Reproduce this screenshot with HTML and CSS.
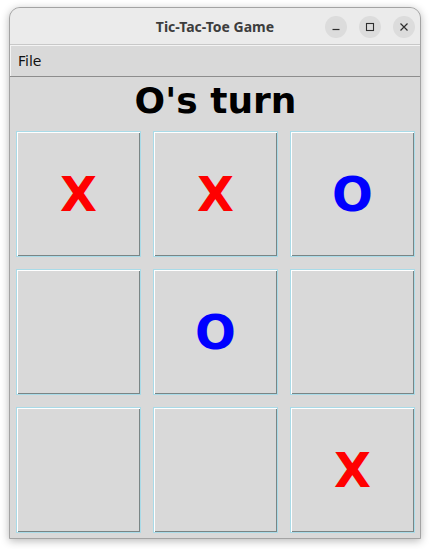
FILE: index.html
```html
<!DOCTYPE html>
<html>
<head>
<meta charset="utf-8">
<title>Tic-Tac-Toe Game</title>
<link rel="stylesheet" href="styles.css">
</head>
<body>
<div class="window">
  <div class="titlebar">
    <div class="spacer"></div>
    <div class="title">Tic-Tac-Toe Game</div>
    <div class="controls">
      <span class="ctl"><svg width="22" height="22" viewBox="0 0 22 22"><line x1="7.5" y1="13.5" x2="14.5" y2="13.5" stroke="#2e2e2e" stroke-width="1.2"/></svg></span>
      <span class="ctl"><svg width="22" height="22" viewBox="0 0 22 22"><rect x="7.5" y="7.5" width="7" height="7" fill="none" stroke="#2e2e2e" stroke-width="1.1"/></svg></span>
      <span class="ctl"><svg width="22" height="22" viewBox="0 0 22 22"><path d="M7.5 7.5 L14.5 14.5 M14.5 7.5 L7.5 14.5" stroke="#2e2e2e" stroke-width="1.2"/></svg></span>
    </div>
  </div>
  <div class="menubar"><span class="menu">File</span></div>
  <div class="content">
    <div class="status">O's turn</div>
    <div class="board">
      <div class="cell x">X</div>
      <div class="cell x">X</div>
      <div class="cell o">O</div>
      <div class="cell"></div>
      <div class="cell o">O</div>
      <div class="cell"></div>
      <div class="cell"></div>
      <div class="cell"></div>
      <div class="cell x">X</div>
    </div>
  </div>
</div>
</body>
</html>
```
FILE: styles.css
```css
html, body {
  margin: 0;
  padding: 0;
  background: #ffffff;
}
body {
  padding: 7px 0 0 9px;
  width: 431px;
  height: 549px;
  box-sizing: border-box;
  overflow: hidden;
}
.window {
  width: 412px;
  box-sizing: border-box;
  border: 1px solid #a3a3a3;
  border-radius: 11px 11px 0 0;
  background: #d9d9d9;
  box-shadow: 0 2px 9px rgba(0, 0, 0, 0.28);
}
.titlebar {
  height: 36px;
  background: #ebebeb;
  border-bottom: 1px solid #c8c8c8;
  border-radius: 10px 10px 0 0;
  display: grid;
  grid-template-columns: 1fr auto 1fr;
  align-items: center;
}
.title {
  font-family: "Noto Sans", "DejaVu Sans", sans-serif;
  font-weight: bold;
  font-size: 14px;
  color: #3d3d3d;
  padding-top: 1px;
}
.controls {
  display: flex;
  justify-content: flex-end;
  gap: 12px;
  padding-right: 5px;
  padding-top: 1px;
}
.ctl {
  width: 22px;
  height: 22px;
  border-radius: 50%;
  background: #dcdcdc;
  display: block;
}
.ctl svg {
  display: block;
}
.menubar {
  height: 31px;
  border-bottom: 1px solid #8d8d8d;
  box-shadow: inset 1px 1px 0 #f4f4f4;
  display: flex;
  align-items: center;
  padding-left: 8px;
}
.menu {
  font-family: "DejaVu Sans", sans-serif;
  font-size: 14px;
  color: #111;
}
.content {
  padding: 0 5px 5px 6px;
}
.status {
  height: 48px;
  line-height: 48px;
  text-align: center;
  font-family: "DejaVu Sans", sans-serif;
  font-weight: bold;
  font-size: 36px;
  color: #000;
  margin-bottom: 6px;
}
.board {
  display: grid;
  grid-template-columns: repeat(3, 125px);
  grid-template-rows: repeat(3, 126px);
  column-gap: 12px;
  row-gap: 12px;
}
.cell {
  box-sizing: border-box;
  border: 1px solid #a9dbe8;
  box-shadow: inset 1px 1px 0 #ffffff, inset -1px -1px 0 #7a8585;
  background: #d9d9d9;
  display: flex;
  align-items: center;
  justify-content: center;
  font-family: "DejaVu Sans", sans-serif;
  font-weight: bold;
  font-size: 48px;
}
.x {
  color: #ff0000;
}
.o {
  color: #0000ff;
}
```
